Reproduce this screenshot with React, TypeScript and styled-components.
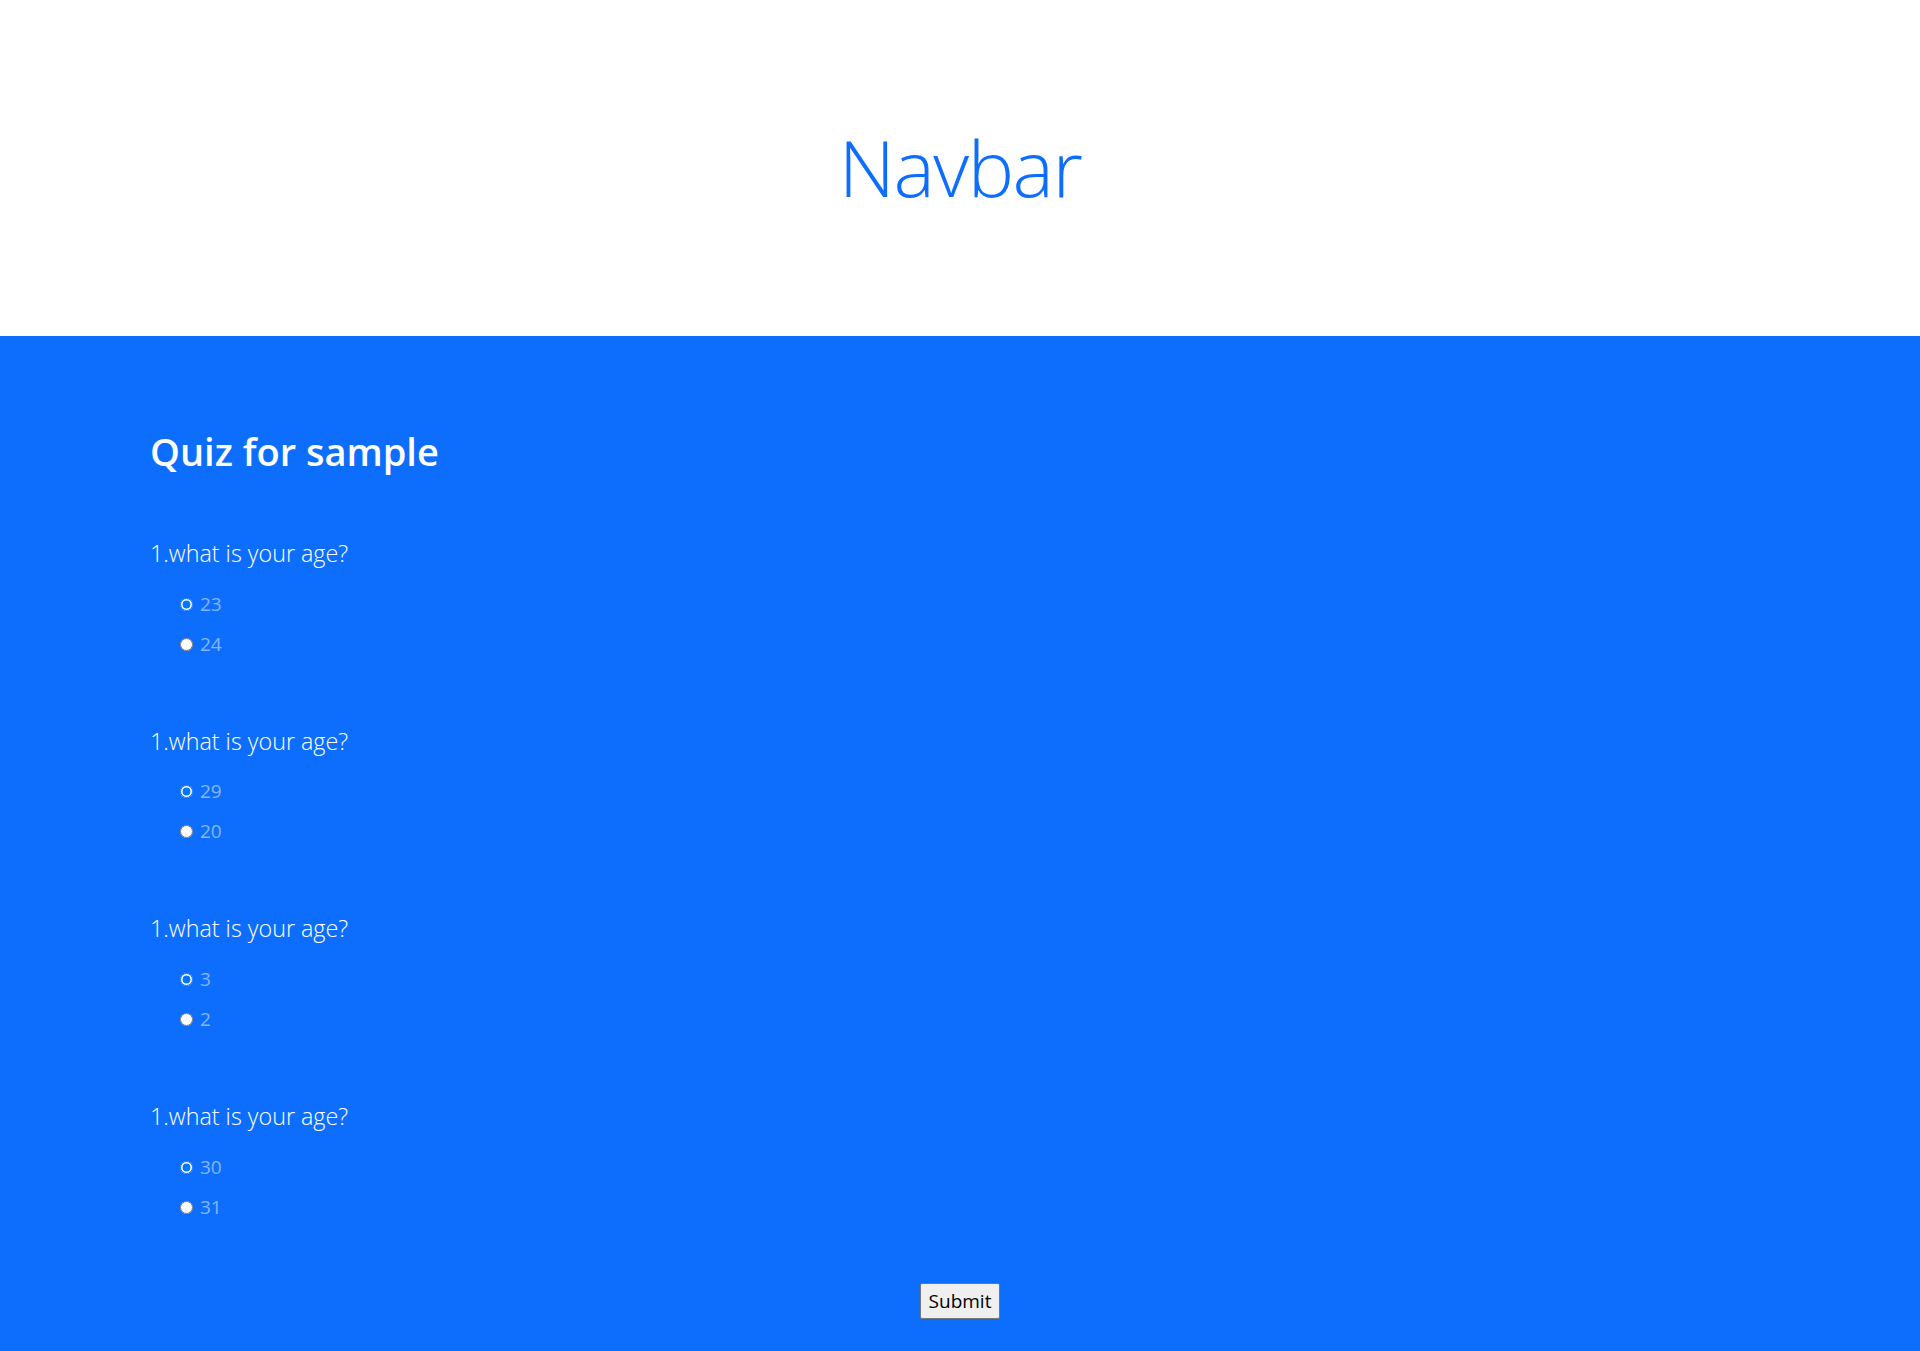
import React from "react";
import styled, { createGlobalStyle } from "styled-components";

const GlobalStyle = createGlobalStyle`
  html, body {
    margin: 0;
    padding: 0;
    background: #0d6efd;
  }
  body {
    font-family: "Open Sans", "Noto Sans", sans-serif;
  }
`;

const Header = styled.header`
  height: 336px;
  background: #ffffff;
  display: flex;
  align-items: center;
  justify-content: center;
`;

const Brand = styled.h1`
  margin: 0;
  font-size: 78px;
  font-weight: 300;
  letter-spacing: -1.5px;
  color: #0d6efd;
  line-height: 1.2;
`;

const Main = styled.main`
  background: #0d6efd;
  padding: 93px 150px 30px;
`;

const Title = styled.h2`
  margin: 0 0 61px;
  font-size: 38px;
  font-weight: 600;
  color: #ffffff;
  line-height: 1.2;
`;

const Question = styled.section`
  margin-bottom: 65px;
`;

const QuestionText = styled.p`
  margin: 0 0 19px;
  font-size: 23.3px;
  font-weight: 300;
  color: #ffffff;
  line-height: 1.5;
`;

const Options = styled.div`
  display: flex;
  flex-direction: column;
  gap: 11px;
  padding-left: 25px;
`;

const Option = styled.label`
  display: flex;
  align-items: center;
  gap: 4px;
  font-size: 19px;
  color: rgba(255, 255, 255, 0.5);
  line-height: 29px;
`;

const Radio = styled.input`
  margin: 0 3px 0 5px;
  width: 13px;
  height: 13px;
`;

const Footer = styled.div`
  display: flex;
  justify-content: center;
  margin-top: -4px;
`;

const SubmitButton = styled.button`
  font-family: "Open Sans", "Noto Sans", sans-serif;
  font-size: 19px;
  line-height: 24px;
  padding: 5px 8px;
  background: #efefef;
  color: #000;
  border: 1px solid #767676;
  border-radius: 2px;
`;

const questions = [
  { id: "q1", text: "1.what is your age?", options: ["23", "24"] },
  { id: "q2", text: "1.what is your age?", options: ["29", "20"] },
  { id: "q3", text: "1.what is your age?", options: ["3", "2"] },
  { id: "q4", text: "1.what is your age?", options: ["30", "31"] },
];

export default function App() {
  return (
    <>
      <GlobalStyle />
      <Header>
        <Brand>Navbar</Brand>
      </Header>
      <Main>
        <Title>Quiz for sample</Title>
        {questions.map((q) => (
          <Question key={q.id}>
            <QuestionText>{q.text}</QuestionText>
            <Options>
              {q.options.map((o, i) => (
                <Option key={o}>
                  <Radio type="radio" name={q.id} value={o} defaultChecked={i === 0} />
                  {o}
                </Option>
              ))}
            </Options>
          </Question>
        ))}
        <Footer>
          <SubmitButton type="button">Submit</SubmitButton>
        </Footer>
      </Main>
    </>
  );
}
